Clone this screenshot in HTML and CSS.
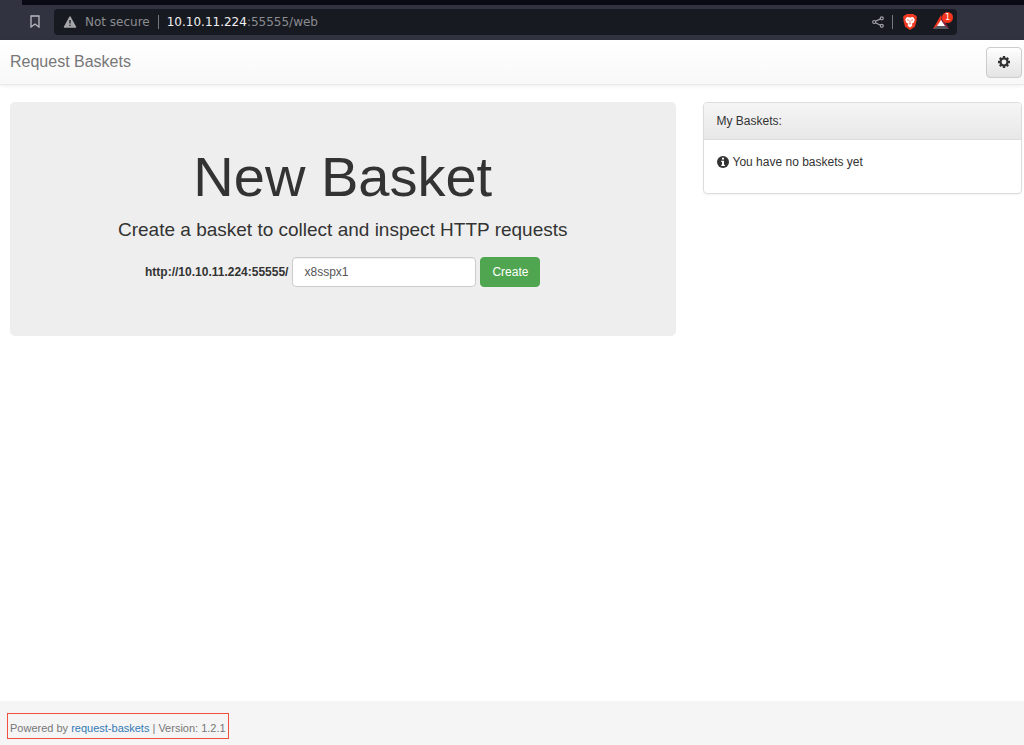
FILE: index.html
```html
<!DOCTYPE html>
<html lang="en">
<head>
    <meta charset="UTF-8">
    <meta name="viewport" content="width=device-width, initial-scale=1">
    <title>Request Baskets</title>
    <link rel="stylesheet" href="styles.css">
</head>
<body>
    <!-- Browser bar -->
    <div class="browser">
        <div class="tab-strip"></div>
        <div class="toolbar">
            <button class="icon-btn" type="button" aria-label="Bookmark">
                <svg width="10" height="13" viewBox="0 0 10 13"><path d="M1 1h8v11L5 9 1 12z" fill="none" stroke="#b9bac0" stroke-width="1.3"/></svg>
            </button>
            <div class="address-bar">
                <svg width="14" height="12" viewBox="0 0 14 12">
                    <path d="M7 1l5.5 10h-11z" fill="#a6a7aa" stroke="#a6a7aa" stroke-width="1.5" stroke-linejoin="round"/>
                    <path d="M7 4v3.5M7 8.7v1.4" stroke="#1a1b22" stroke-width="1.3"/>
                </svg>
                <span class="not-secure">Not secure</span>
                <span class="separator"></span>
                <span class="url"><span class="host">10.10.11.224</span>:55555/web</span>
                <button class="icon-btn" type="button" aria-label="Share">
                    <svg width="12" height="12" viewBox="0 0 12 12" fill="none" stroke="#a2a3a7" stroke-width="1.2">
                        <path d="M3.5 5.3l5-2.4M3.5 6.8l5 2.5"/>
                        <circle cx="2.2" cy="6" r="1.5"/><circle cx="9.8" cy="2.3" r="1.5"/><circle cx="9.8" cy="9.8" r="1.5"/>
                    </svg>
                </button>
                <span class="separator"></span>
                <button class="icon-btn shield" type="button" aria-label="Shields">
                    <svg width="14" height="16" viewBox="0 0 14 16">
                        <path d="M3.5 0h7l1 1.3 1.3-.1 1.2 2-.6 1.8.2 1.8-1.7 6L7 16l-4.9-3.2-1.7-6L.6 5 0 3.2l1.2-2 1.3.1z" fill="#f03a22"/>
                        <path d="M4 3l3 .6L10 3l1.8 2.5-1 3-2 1.3.7 1.8L7 13.5l-2.5-1.9.7-1.8-2-1.3-1-3z" fill="#fff"/>
                        <path d="M4 5.8l1.8.5M10 5.8l-1.8.5M7 6.5v2.3M5.9 9.4L7 10l1.1-.6" fill="none" stroke="#f03a22" stroke-width=".7"/>
                    </svg>
                </button>
                <button class="icon-btn rewards" type="button" aria-label="Rewards">
                    <svg width="16" height="14" viewBox="0 0 16 14">
                        <path d="M8 0L0 14l4-2 4-6z" fill="#f4351d"/>
                        <path d="M8 0l8 14-4-2-4-6z" fill="#8c2540"/>
                        <path d="M0 14l4-3h8l4 3z" fill="#555761"/>
                        <path d="M8 5l4 6H4z" fill="#fff"/>
                    </svg>
                    <span class="badge">1</span>
                </button>
            </div>
        </div>
    </div>

    <!-- Navbar -->
    <nav class="navbar">
        <a class="navbar-brand" href="#">Request Baskets</a>
        <button class="btn btn-default" type="button" aria-label="Settings">
            <svg width="14" height="14" viewBox="0 0 14 14">
                <g stroke="#333" stroke-width="2.4"><path d="M7 1v12M1 7h12M2.8 2.8l8.4 8.4M11.2 2.8l-8.4 8.4"/></g>
                <circle cx="7" cy="7" r="4.5" fill="#333"/>
                <circle cx="7" cy="7" r="2.4" fill="#f3f3f3"/>
            </svg>
        </button>
    </nav>

    <!-- Content -->
    <main class="row">
        <section class="jumbotron">
            <h1>New Basket</h1>
            <p>Create a basket to collect and inspect HTTP requests</p>
            <form class="create-form">
                <label for="basket_name">http://10.10.11.224:55555/</label>
                <input class="form-control" id="basket_name" type="text" value="x8sspx1">
                <button class="btn btn-success" type="button">Create</button>
            </form>
        </section>
        <aside class="panel">
            <div class="panel-heading">My Baskets:</div>
            <div class="panel-body">
                <svg width="12" height="12" viewBox="0 0 12 12">
                    <circle cx="6" cy="6" r="6" fill="#333"/>
                    <path d="M5 1.7h2v1.7H5zM4.2 4.7H7v4h.9V10H4.2V8.7H5V6h-.8z" fill="#fff"/>
                </svg>
                <span>You have no baskets yet</span>
            </div>
        </aside>
    </main>

    <footer class="footer">
        <p class="powered">Powered by <a href="#">request-baskets</a> | Version: 1.2.1</p>
    </footer>
</body>
</html>
```

FILE: styles.css
```css
* {
    box-sizing: border-box;
}

body {
    margin: 0;
    min-height: 100vh;
    display: flex;
    flex-direction: column;
    background-color: #fff;
    color: #333;
    font-family: "Liberation Sans", Arial, sans-serif;
    font-size: 12px;
    line-height: 18px;
}

button, input {
    font-family: inherit;
    font-size: inherit;
    line-height: inherit;
}

a {
    color: #337ab7;
    text-decoration: none;
}

svg {
    display: block;
    flex: none;
}

/* Browser bar */
.browser {
    background-color: #313341;
    font-family: "DejaVu Sans", sans-serif;
}

.tab-strip {
    height: 5px;
    margin-left: 22px;
    background-color: #0a0a14;
}

.toolbar {
    display: flex;
    align-items: center;
    gap: 14px;
    height: 35px;
    padding: 0 67px 2px 30px;
}

.icon-btn {
    position: relative;
    padding: 0;
    border: none;
    background: none;
    cursor: pointer;
}

.address-bar {
    flex: 1;
    display: flex;
    align-items: center;
    gap: 8px;
    height: 26px;
    padding: 0 8px 0 9px;
    border-radius: 4px;
    background-color: #181a21;
    color: #8b8c90;
}

.url {
    flex: 1;
}

.host {
    color: #f0f0f2;
}

.separator {
    width: 1px;
    height: 14px;
    background-color: #77787d;
}

.shield {
    margin: 0 8px 0 2px;
}

.badge {
    position: absolute;
    top: -3px;
    right: -4px;
    width: 11px;
    height: 11px;
    border-radius: 50%;
    background-color: #f4351d;
    color: #fff;
    font-size: 8px;
    line-height: 11px;
    text-align: center;
}

/* Navbar */
.navbar {
    display: flex;
    align-items: center;
    justify-content: space-between;
    height: 45px;
    padding: 0 2px 0 10px;
    border-bottom: 1px solid #e9e9e9;
    background-image: linear-gradient(#fff, #f8f8f8);
    box-shadow: 0 1px 4px rgba(0,0,0,0.07);
}

.navbar-brand {
    color: #777;
    font-size: 16px;
}

.btn {
    padding: 5px 11px;
    border: 1px solid transparent;
    border-radius: 4px;
    cursor: pointer;
}

.btn-default {
    height: 31px;
    padding: 0 10px;
    border-color: #ccc;
    background-image: linear-gradient(#fff, #e3e3e3);
}

.btn-success {
    border-color: #4ca64c;
    background-color: #50a550;
    color: #fff;
}

/* Content */
.row {
    flex: 1;
    display: grid;
    grid-template-columns: 25fr 12fr;
    align-items: start;
    gap: 27px;
    padding: 17px 2px 20px 10px;
}

.jumbotron {
    padding: 43px 53px 49px;
    border-radius: 5px;
    background-color: #eee;
    text-align: center;
}

.jumbotron h1 {
    margin: 0 0 7px;
    font-size: 56px;
    font-weight: 500;
    line-height: 64px;
}

.jumbotron p {
    margin: 0 0 14px;
    font-size: 19px;
    line-height: 27px;
}

.create-form {
    display: flex;
    align-items: center;
    justify-content: center;
    gap: 4px;
}

.create-form label {
    font-weight: bold;
}

.form-control {
    width: 184px;
    height: 30px;
    padding: 5px 11px;
    border: 1px solid #ccc;
    border-radius: 4px;
    background-color: #fff;
    color: #555;
    box-shadow: inset 0 1px 1px rgba(0,0,0,0.07);
}

.panel {
    border: 1px solid #ddd;
    border-radius: 4px;
    box-shadow: 0 1px 2px rgba(0,0,0,0.05);
}

.panel-heading {
    padding: 9px 13px;
    border-bottom: 1px solid #ddd;
    border-radius: 3px 3px 0 0;
    background-image: linear-gradient(#f5f5f5, #e8e8e8);
}

.panel-body {
    display: flex;
    align-items: center;
    gap: 4px;
    padding: 13px 13px 22px;
}

/* Footer */
.footer {
    padding: 12px 7px 6px;
    background-color: #f5f5f5;
    color: #777;
    font-size: 11px;
    line-height: 16px;
}

.powered {
    width: fit-content;
    margin: 0;
    padding: 6px 2px 2px 2px;
    border: 1px solid #f0513c;
}
```
